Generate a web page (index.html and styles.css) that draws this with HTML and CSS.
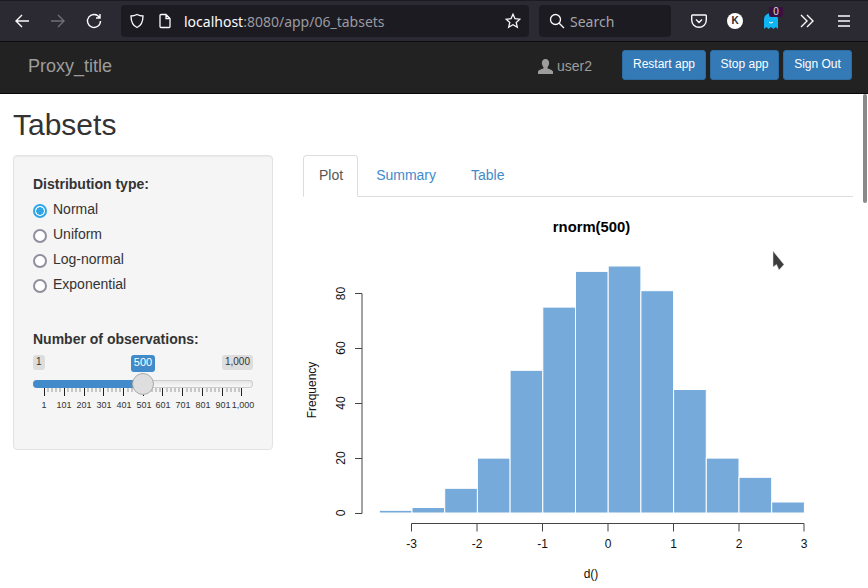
FILE: index.html
```html
<!DOCTYPE html>
<html>
	<head>
		<meta charset="utf-8">
		<title>Tabsets</title>
		<link rel="stylesheet" href="styles.css">
	</head>
	<body>
		<!-- browser toolbar -->
		<div class="toolbar">
			<svg class="tool-icon first" viewBox="0 0 16 16"><path d="M15 8H2M8 2L2 8l6 6" /></svg>
			<svg class="tool-icon dim" viewBox="0 0 16 16"><path d="M1 8h13M8 2l6 6-6 6" /></svg>
			<svg class="tool-icon" viewBox="0 0 16 16"><path d="M13.5 4.5A6.5 6.5 0 1 0 14.5 8M14 1v4h-4" /></svg>
			<div class="urlbar">
				<svg class="url-icon" viewBox="0 0 16 16"><path d="M8 1.5c2 1 4 1.5 6 1.5 0 5.5-1.500 9.500-6 11.500C3.500 12.500 2 8.500 2 3c2 0 4-.5 6-1.500z" /></svg>
				<svg class="url-icon doc" viewBox="0 0 16 16"><path d="M3 2.500a1 1 0 0 1 1-1h5l4 4v8a1 1 0 0 1-1 1H4a1 1 0 0 1-1-1zM9 1.500v4h4" /></svg>
				<span class="url"><span class="host">localhost</span>:8080/app/06_tabsets</span>
				<svg class="url-icon star" viewBox="0 0 16 16"><path d="M8 1.200l2 4.500 4.900.5-3.700 3.200 1.100 4.800L8 11.700l-4.300 2.500 1.100-4.800L1.100 6.200 6 5.700z" /></svg>
			</div>
			<div class="searchbar">
				<svg class="url-icon" viewBox="0 0 16 16"><circle cx="6.500" cy="6.500" r="5" /><path d="M10.200 10.200L15 15" /></svg>
				<span>Search</span>
			</div>
			<svg class="tool-icon pocket" viewBox="0 0 16 16"><path d="M1.500 2h13a.8.8 0 0 1 .8.8V7a7.300 7.300 0 0 1-14.600 0V2.800a.8.8 0 0 1 .8-.8zM5 6.500l3 3 3-3" /></svg>
			<div class="k-badge">K</div>
			<div class="ghost">
				<svg viewBox="0 0 14 16"><path class="ghost-body" d="M0 16V6a7 6 0 0 1 14 0v10l-2.300-2-2.300 2-2.400-2-2.400 2-2.300-2z" /><path class="ghost-smile" d="M5 9c1 1.200 3 1.200 4 0" /></svg>
				<span class="ghost-count">0</span>
			</div>
			<svg class="tool-icon chevrons" viewBox="0 0 16 16"><path d="M2 2l6 6-6 6M8 2l6 6-6 6" /></svg>
			<svg class="tool-icon burger" viewBox="0 0 16 16"><path d="M2 3h12M2 8h12M2 13h12" /></svg>
		</div>

		<!-- app navbar -->
		<div class="navbar">
			<span class="brand">Proxy_title</span>
			<span class="user">
				<svg class="user-icon" viewBox="0 0 14 14"><path d="M7 0c2.200 0 3.400 1.600 3.400 3.800 0 1.500-.7 3-1.500 3.800v1.200c2 .7 5.100 1.500 5.100 3.200v2H0v-2c0-1.700 3.100-2.500 5.100-3.200V7.600c-.8-.8-1.500-2.300-1.500-3.800C3.600 1.600 4.800 0 7 0z" /></svg>
				user2
			</span>
			<a class="btn restart">Restart app</a>
			<a class="btn">Stop app</a>
			<a class="btn">Sign Out</a>
		</div>

		<div class="page">
			<h1>Tabsets</h1>
			<div class="columns">
				<!-- sidebar -->
				<div class="well">
					<div class="label">Distribution type:</div>
					<div class="radio"><span class="dot checked"></span>Normal</div>
					<div class="radio"><span class="dot"></span>Uniform</div>
					<div class="radio"><span class="dot"></span>Log-normal</div>
					<div class="radio"><span class="dot"></span>Exponential</div>

					<div class="label obs">Number of observations:</div>
					<div class="slider">
						<div class="tags">
							<span class="tag">1</span>
							<span class="tag">1,000</span>
							<span class="tag from">500</span>
						</div>
						<div class="track"><div class="fill"></div></div>
						<div class="handle"></div>
						<svg class="ticks" viewBox="33 388 224 22">
							<path class="tick minor" d="M48 388v4M52 388v4M56 388v4M60 388v4M68 388v4M72 388v4M76 388v4M80 388v4M88 388v4M92 388v4M96 388v4M100 388v4M108 388v4M112 388v4M116 388v4M120 388v4M128 388v4M132 388v4M136 388v4M140 388v4M148 388v4M152 388v4M156 388v4M160 388v4M167 388v4M171 388v4M175 388v4M179 388v4M187 388v4M191 388v4M195 388v4M199 388v4M207 388v4M211 388v4M215 388v4M219 388v4M227 388v4M231 388v4M235 388v4M239 388v4" />
							<path class="tick" d="M44.500 388v8M64.500 388v8M84.500 388v8M103.500 388v8M123.500 388v8M143.500 388v8M162.500 388v8M182.500 388v8M202.500 388v8M222.500 388v8M241.500 388v8" />
							<g class="tick-text">
								<text x="44" y="408">1</text>
								<text x="64" y="408">101</text>
								<text x="84" y="408">201</text>
								<text x="104" y="408">301</text>
								<text x="124" y="408">401</text>
								<text x="144" y="408">501</text>
								<text x="163" y="408">601</text>
								<text x="183" y="408">701</text>
								<text x="203" y="408">801</text>
								<text x="223" y="408">901</text>
								<text x="243" y="408">1,000</text>
							</g>
						</svg>
					</div>
				</div>

				<!-- main panel -->
				<div class="main">
					<ul class="tabs">
						<li class="active">Plot</li>
						<li class="summary">Summary</li>
						<li>Table</li>
					</ul>
					<svg class="plot" viewBox="303 197 550 391">
						<text class="plot-title" x="591.500" y="232">rnorm(500)</text>
						<g class="bars">
							<rect x="379.3" y="510.3" width="32.7" height="2.7" />
							<rect x="412" y="507.5" width="32.7" height="5.5" />
							<rect x="444.7" y="488.3" width="32.7" height="24.7" />
							<rect x="477.4" y="458.1" width="32.7" height="54.9" />
							<rect x="510.1" y="370.3" width="32.7" height="142.7" />
							<rect x="542.8" y="307.1" width="32.7" height="205.9" />
							<rect x="575.5" y="271.4" width="32.7" height="241.6" />
							<rect x="608.2" y="266" width="32.7" height="247" />
							<rect x="640.9" y="290.7" width="32.7" height="222.3" />
							<rect x="673.6" y="389.5" width="32.7" height="123.5" />
							<rect x="706.3" y="458.1" width="32.7" height="54.9" />
							<rect x="739" y="477.3" width="32.7" height="35.7" />
							<rect x="771.7" y="502" width="32.7" height="11" />
						</g>
						<path class="axis" d="M362 513.500V293.500M362 513.500h-7M362 458.500h-7M362 403.500h-7M362 348.500h-7M362 293.500h-7" />
						<path class="axis" d="M411.500 523.500h392.500M411.500 523.500v8M477 523.500v8M542.500 523.500v8M608 523.500v8M673.500 523.500v8M739 523.500v8M804 523.500v8" />
						<g class="axis-text">
							<text transform="translate(345 513) rotate(-90)">0</text>
							<text transform="translate(345 458) rotate(-90)">20</text>
							<text transform="translate(345 403) rotate(-90)">40</text>
							<text transform="translate(345 348) rotate(-90)">60</text>
							<text transform="translate(345 293.500) rotate(-90)">80</text>
							<text transform="translate(316 390) rotate(-90)">Frequency</text>
							<text x="411.500" y="548">-3</text>
							<text x="477" y="548">-2</text>
							<text x="542.500" y="548">-1</text>
							<text x="608" y="548">0</text>
							<text x="673.500" y="548">1</text>
							<text x="739" y="548">2</text>
							<text x="804" y="548">3</text>
							<text x="591" y="578">d()</text>
						</g>
					</svg>
				</div>
			</div>
		</div>

		<!-- things lying over the page -->
		<div class="scrollthumb"></div>
		<svg class="cursor" viewBox="0 0 13 21"><path d="M1 1v16l3.500-2.500L7 20l.5-.5 4.500-5z" /></svg>
	</body>
</html>
```

FILE: styles.css
```css
*{
	margin: 0;padding: 0;
	box-sizing: border-box;
}
html,body{
	height: 100%;
	overflow: hidden;
}
body{
	font-family: "Liberation Sans", Arial, sans-serif;
	font-size: 14px;
	color: #333;
	background-color: #fff;
}

/* browser toolbar */
.toolbar{
	height: 42px;
	display: flex;
	align-items: center;
	background-color: #2b2a33;
	border-top: 1px solid #1c1b22;
	border-bottom: 1px solid #0c0c0d;
}
.tool-icon{
	width: 16px;height: 16px;
	margin-left: 20px;
	fill: none;
	stroke: #fbfbfe;
	stroke-width: 1.4;
	flex: none;
}
.tool-icon.first{
	margin-left: 14px;
}
.tool-icon.dim{
	stroke: #6f6e75;
}
.urlbar{
	width: 408px;height: 32px;
	margin-left: 19px;
	display: flex;
	align-items: center;
	background-color: #1c1b22;
	border-radius: 4px;
	padding: 0 8px;
	font-family: "Noto Sans", sans-serif;
	font-size: 14px;
	color: #9a9aa0;
}
.url-icon{
	width: 16px;height: 16px;
	fill: none;
	stroke: #fbfbfe;
	stroke-width: 1.3;
	flex: none;
}
.url-icon.doc{
	margin-left: 12px;
}
.url{
	margin-left: 11px;
	flex: 1;
}
.host{
	color: #fbfbfe;
}
.searchbar{
	width: 132px;height: 32px;
	margin-left: 10px;
	display: flex;
	align-items: center;
	gap: 5px;
	background-color: #1c1b22;
	border-radius: 4px;
	padding: 0 10px;
	font-family: "Noto Sans", sans-serif;
	font-size: 14px;
	color: #a5a5aa;
}
.pocket{
	margin-left: 20px;
}
.k-badge{
	width: 16px;height: 16px;
	margin-left: 20px;
	border-radius: 50%;
	background-color: #fff;
	color: #2b2a33;
	font-size: 10px;
	font-weight: bold;
	line-height: 16px;
	text-align: center;
	flex: none;
}
.ghost{
	position: relative;
	width: 14px;height: 16px;
	margin-left: 21px;
	flex: none;
}
.ghost svg{
	display: block;
	width: 14px;height: 16px;
}
.ghost-body{
	fill: #0fb4f0;
}
.ghost-smile{
	fill: none;
	stroke: #fff;
	stroke-width: 1;
}
.ghost-count{
	position: absolute;
	top: -6px;left: 5px;
	width: 14px;height: 10px;
	background-color: #3b0f40;
	border-radius: 2px;
	color: #ddd;
	font-size: 10px;
	line-height: 10px;
	text-align: center;
}
.chevrons{
	margin-left: 21px;
}
.burger{
	margin-left: 21px;
}

/* app navbar */
.navbar{
	height: 52px;
	display: flex;
	align-items: center;
	background-color: #222;
	border-bottom: 1px solid #080808;
	padding: 0 16px 3px 28px;
	color: #9d9d9d;
}
.brand{
	font-size: 18px;
	margin-top: 1px;
	flex: 1;
}
.user{
	display: flex;
	align-items: center;
	gap: 4px;
	margin-right: 30px;
}
.user-icon{
	width: 15px;height: 15px;
	fill: #9d9d9d;
}
.btn{
	width: 69px;height: 30px;
	margin-top: -2px;
	margin-left: 4px;
	background-color: #337ab7;
	border: 1px solid #2e6da4;
	border-radius: 3px;
	color: #fff;
	font-size: 12px;
	line-height: 26px;
	text-align: center;
}
.btn.restart{
	width: 84px;
	margin-left: 0;
}

/* page */
.page{
	padding: 0 15px 0 13px;
}
h1{
	font-size: 30px;
	font-weight: normal;
	line-height: 33px;
	margin-top: 14px;
	margin-bottom: 14px;
}
.columns{
	display: flex;
	gap: 30px;
	align-items: flex-start;
}

/* sidebar */
.well{
	width: 260px;height: 295px;
	background-color: #f5f5f5;
	border: 1px solid #e3e3e3;
	border-radius: 4px;
	padding: 18px 19px;
	flex: none;
	box-shadow: inset 0 1px 1px rgba(0,0,0,.05);
}
.label{
	font-weight: bold;
	line-height: 20px;
	margin-bottom: 5px;
}
.radio{
	height: 25px;
	line-height: 20px;
	display: flex;
	gap: 6px;
}
.dot{
	width: 14px;height: 14px;
	margin-top: 5px;
	border: 2px solid #8f8f9d;
	border-radius: 50%;
	background-color: #fff;
	flex: none;
}
.dot.checked{
	border-color: #2ea6e6;
	background: radial-gradient(circle, #2ea6e6 0 3.500px, #fff 4px);
}
.label.obs{
	margin-top: 30px;
	margin-bottom: 6px;
}

/* slider */
.slider{
	position: relative;
	width: 220px;
}
.tags{
	display: flex;
	justify-content: space-between;
	height: 25px;
}
.tag{
	height: 15px;
	padding: 0 3px;
	background-color: #ddd;
	border-radius: 3px;
	color: #333;
	font-size: 10px;
	line-height: 13px;
}
.tag.from{
	position: absolute;
	left: 98px;top: 0;
	width: 24px;height: 17px;
	padding: 0;
	background-color: #428bca;
	color: #fff;
	font-size: 11px;
	text-align: center;
	line-height: 15px;
}
.track{
	height: 8px;
	background: linear-gradient(#e4e4e4, #fafafa);
	border-radius: 4px;
	box-shadow: inset 0 0 0 1px #ccc;
	overflow: hidden;
}
.fill{
	width: 110px;height: 8px;
	background-color: #428bca;
}
.handle{
	position: absolute;
	left: 99px;top: 18px;
	width: 22px;height: 22px;
	background-color: #dedede;
	border: 1px solid #aaa;
	border-radius: 50%;
}
.ticks{
	display: block;
	width: 224px;height: 22px;
}
.tick{
	stroke: #222;
	stroke-width: 1;
	fill: none;
}
.tick.minor{
	stroke: #999;
}
.tick-text text{
	font-size: 9px;
	text-anchor: middle;
	fill: #333;
}

/* tabs */
.main{
	flex: 1;
	min-width: 0;
}
.tabs{
	list-style: none;
	display: flex;
	gap: 2px;
	height: 42px;
	border-bottom: 1px solid #ddd;
}
.tabs li{
	height: 42px;
	padding: 9px 15px;
	border: 1px solid transparent;
	border-radius: 4px 4px 0 0;
	line-height: 20px;
	color: #428bca;
}
.tabs li.active{
	padding-right: 14px;
	color: #555;
	background-color: #fff;
	border-color: #ddd;
	border-bottom-color: #fff;
}
.tabs li.summary{
	padding-right: 16px;
}

/* histogram */
.plot{
	display: block;
	width: 550px;height: 391px;
}
.plot text{
	font-family: "Liberation Sans", Arial, sans-serif;
}
.plot-title{
	font-size: 14.8px;
	font-weight: bold;
	text-anchor: middle;
	fill: #000;
}
.bars rect{
	fill: #75aadb;
	stroke: #fff;
	stroke-width: 1;
}
.axis{
	fill: none;
	stroke: #444;
	stroke-width: 1;
}
.axis-text text{
	font-size: 12px;
	text-anchor: middle;
	fill: #111;
}

/* overlays */
.scrollthumb{
	position: absolute;
	left: 863px;top: 94px;
	width: 4px;height: 109px;
	background-color: #8a8a8a;
	border-radius: 2px;
}
.cursor{
	position: absolute;
	left: 772px;top: 250px;
	width: 13px;height: 21px;
	fill: #3d3d3d;
	stroke: #e8e8e8;
	stroke-width: .5;
}
```
